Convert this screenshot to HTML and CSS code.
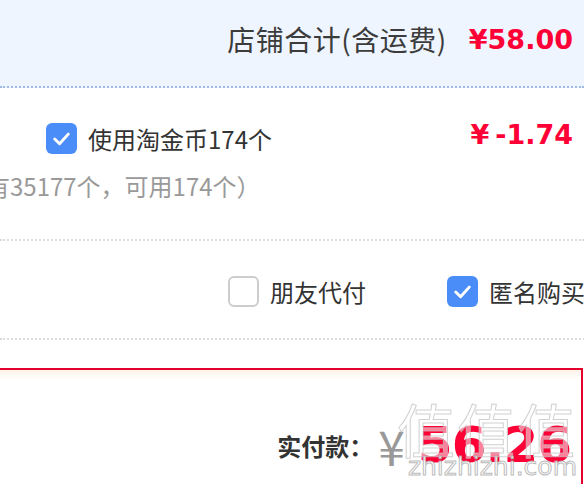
FILE: index.html
```html
<!DOCTYPE html>
<html lang="zh">
<head>
<meta charset="utf-8">
<link rel="stylesheet" href="styles.css">
</head>
<body>
<div class="page">
  <div class="shop-total">
    <span class="label">店铺合计(含运费)</span>
    <span class="price">¥58.00</span>
  </div>

  <div class="coin-section">
    <div class="coin-row">
      <label class="check">
        <span class="box checked"><svg viewBox="0 0 32 32"><path d="M9 16.5l5 5 9-10" fill="none" stroke="#fff" stroke-width="3" stroke-linecap="round" stroke-linejoin="round"/></svg></span>
        <span class="check-text">使用淘金币174个</span>
      </label>
      <span class="discount">¥<span class="minus">-1.74</span></span>
    </div>
    <div class="coin-note">共拥有35177个，可用174个）</div>
  </div>

  <div class="options">
    <label class="check">
      <span class="box"></span>
      <span class="check-text">朋友代付</span>
    </label>
    <label class="check">
      <span class="box checked"><svg viewBox="0 0 32 32"><path d="M9 16.5l5 5 9-10" fill="none" stroke="#fff" stroke-width="3" stroke-linecap="round" stroke-linejoin="round"/></svg></span>
      <span class="check-text">匿名购买</span>
    </label>
  </div>

  <div class="pay-box">
    <div class="pay-inner">
      <span class="pay-label">实付款：</span>
      <span class="pay-yen">¥</span>
      <span class="pay-amount">56.26</span>
      <div class="watermark">
        <span class="wm-top">值值值</span>
        <span class="wm-url">zhizhizhi.com</span>
      </div>
    </div>
  </div>
</div>
</body>
</html>
```

FILE: styles.css
```css
html, body {
  margin: 0;
  padding: 0;
  background: #fff;
}
body {
  width: 584px;
  height: 484px;
  overflow: hidden;
  font-family: "Noto Sans CJK SC", "Noto Sans", sans-serif;
  color: #333;
}
.page {
  width: 584px;
}
.shop-total {
  height: 88px;
  box-sizing: border-box;
  padding-bottom: 8px;
  background: #eff5ff;
  border-bottom: 2px dotted #9fbbe4;
  display: flex;
  justify-content: flex-end;
  align-items: center;
  gap: 22px;
  padding-right: 11px;
}
.shop-total .label {
  font-size: 28px;
  letter-spacing: 0.5px;
  color: #3c3c3c;
}
.price, .discount, .pay-amount {
  font-family: "DejaVu Sans", "Noto Sans", sans-serif;
  font-weight: bold;
  color: #ff0036;
}
.price {
  font-size: 27px;
}
.coin-section {
  height: 153px;
  border-bottom: 2px dotted #dcdcdc;
  box-sizing: border-box;
  padding-top: 33px;
}
.coin-row {
  display: flex;
  justify-content: space-between;
  align-items: flex-start;
  padding-left: 46px;
  padding-right: 11px;
}
.check {
  display: flex;
  align-items: center;
  gap: 11px;
}
.box {
  width: 31px;
  height: 31px;
  box-sizing: border-box;
  border: 2px solid #cdcdcd;
  border-radius: 6px;
  background: #fff;
  display: flex;
}
.box.checked {
  border: none;
  background: #4b8df8;
}
.box svg {
  width: 31px;
  height: 31px;
}
.check-text {
  font-size: 24px;
  color: #333;
}
.discount {
  font-size: 27px;
  margin-top: -2px;
}
.discount .minus {
  margin-left: 6px;
}
.coin-note {
  font-size: 24px;
  color: #999;
  margin-left: -62px;
  margin-top: 12px;
  white-space: nowrap;
}
.options {
  height: 99px;
  box-sizing: border-box;
  padding-top: 4px;
  border-bottom: 2px dotted #dcdcdc;
  display: flex;
  justify-content: flex-end;
  align-items: center;
  gap: 81px;
  margin-right: -1px;
}
.pay-box {
  margin-top: 28px;
  margin-left: -10px;
  margin-right: 1px;
  border-top: 2px solid #e5002d;
  border-right: 2px solid #e5002d;
  height: 200px;
  background: linear-gradient(#fdf3e8, #fff 10px);
}
.pay-inner {
  position: relative;
  display: flex;
  justify-content: flex-end;
  align-items: center;
  padding-top: 40px;
  padding-right: 10px;
  gap: 13px;
}
.pay-label {
  font-size: 24px;
  font-weight: bold;
  color: #333;
  margin-right: -8px;
}
.pay-yen {
  font-size: 48px;
  color: #999;
  font-family: "Noto Sans CJK SC", sans-serif;
}
.pay-amount {
  font-size: 50px;
  letter-spacing: -1px;
}
.watermark {
  position: absolute;
  right: 4px;
  top: 34px;
  display: flex;
  flex-direction: column;
  align-items: flex-end;
  pointer-events: none;
}
.wm-top {
  font-size: 58px;
  line-height: 48px;
  letter-spacing: 2px;
  color: rgba(255, 255, 255, 0.5);
  -webkit-text-stroke: 1px rgba(190, 190, 190, 0.7);
  font-family: "Noto Sans CJK SC", sans-serif;
}
.wm-url {
  font-size: 25px;
  line-height: 30px;
  font-family: "DejaVu Sans", sans-serif;
  color: rgba(255, 255, 255, 0.9);
  -webkit-text-stroke: 1px rgba(170, 170, 170, 0.8);
}
```
